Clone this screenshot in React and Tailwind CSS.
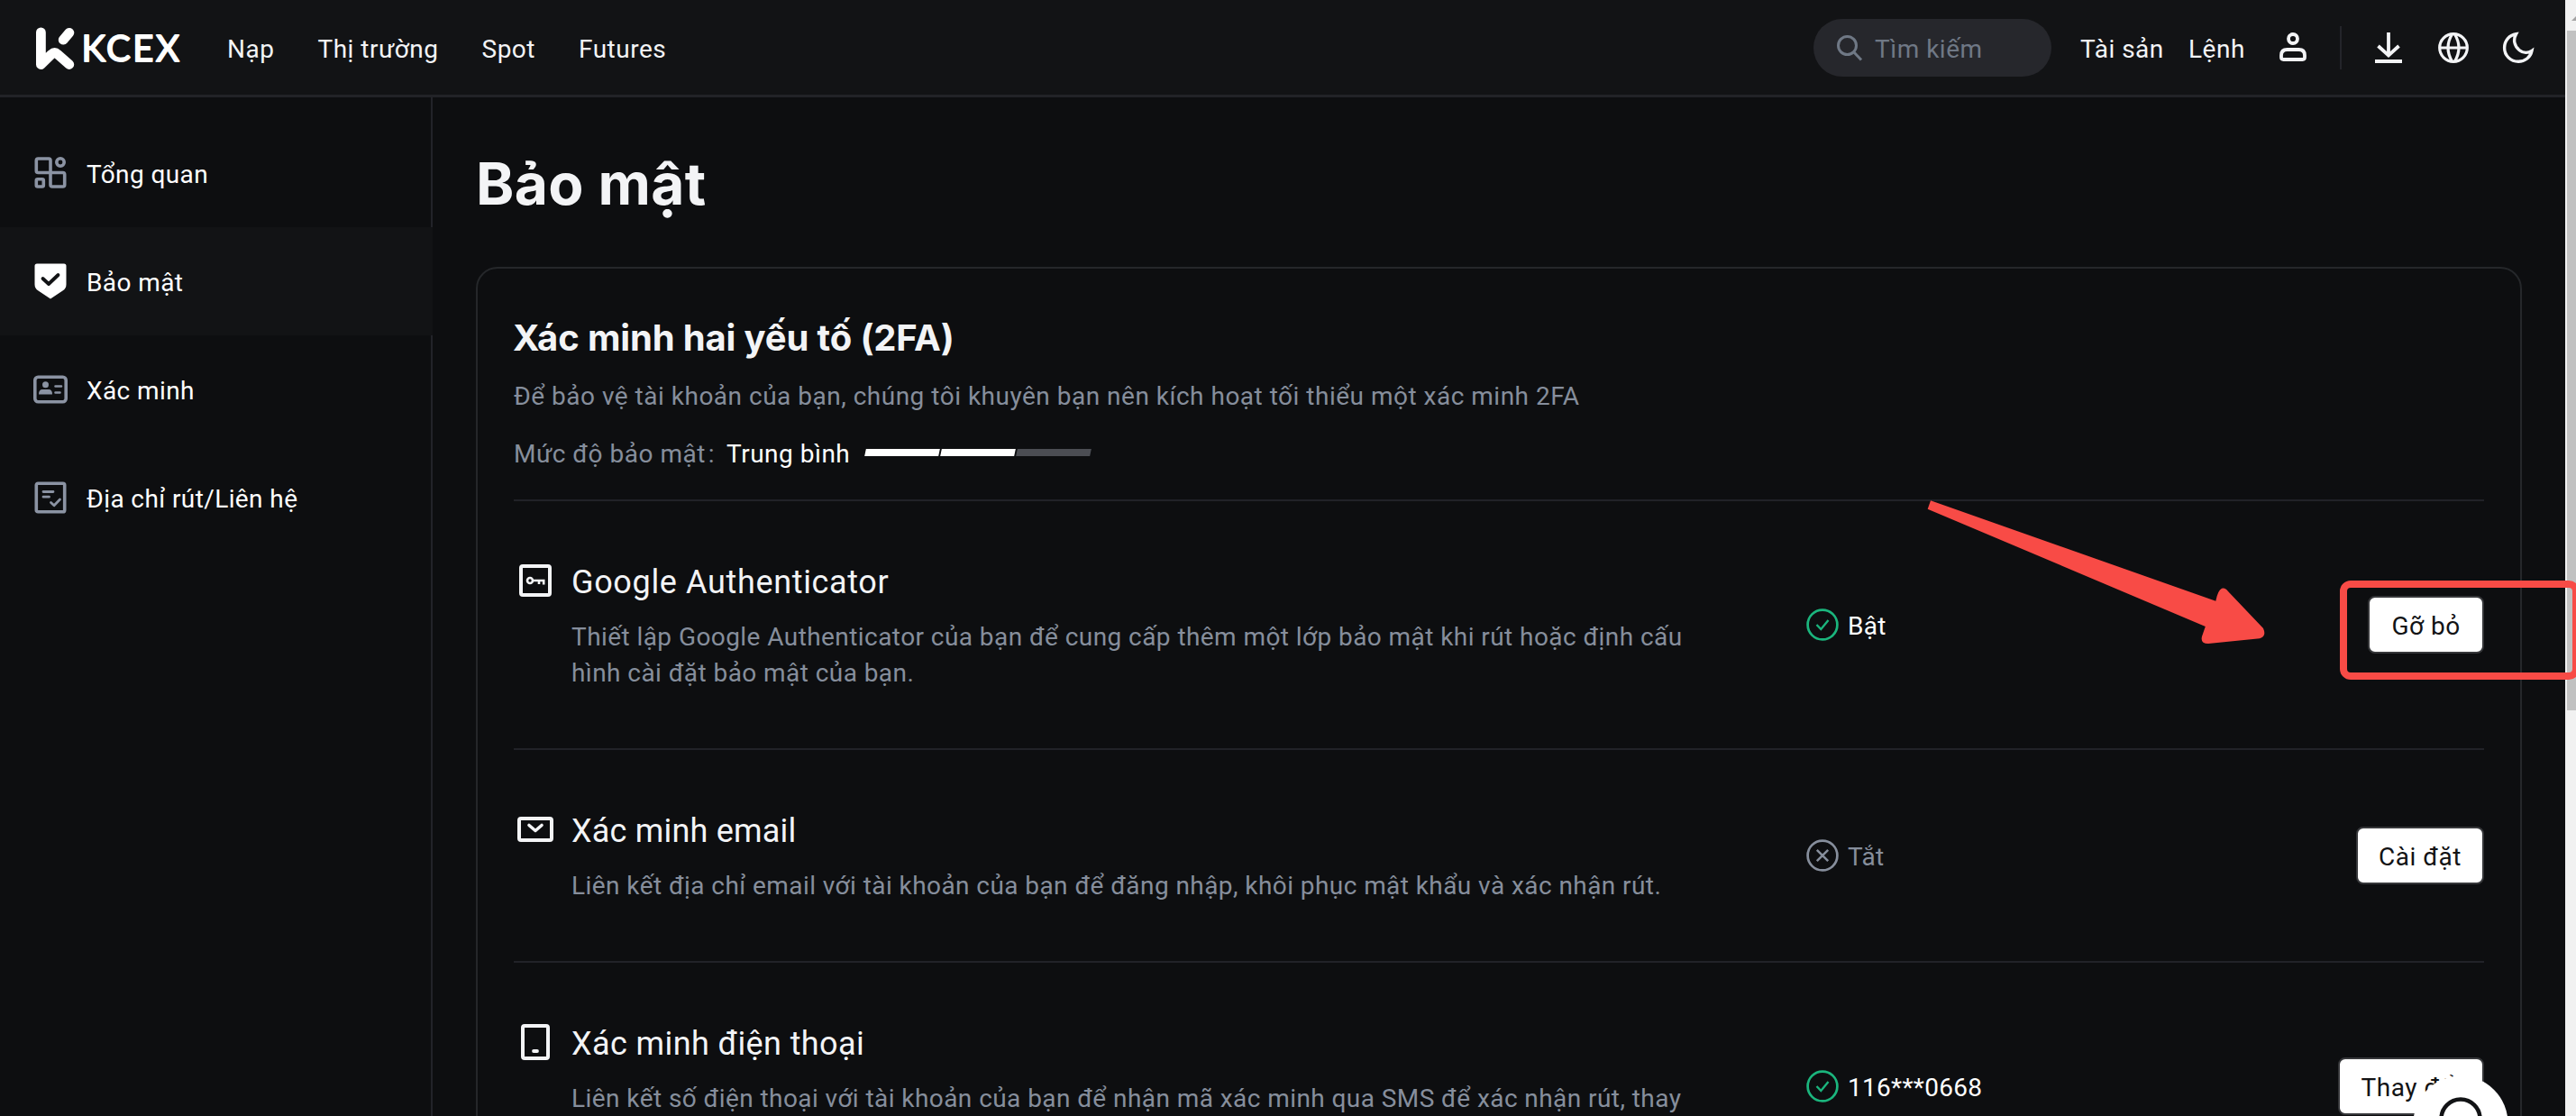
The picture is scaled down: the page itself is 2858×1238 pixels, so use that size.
import React from "react";

function LogoMark() {
  return (
    <svg width="46" height="48" viewBox="0 0 46 48" fill="none" stroke="#ffffff" strokeWidth="10.8" strokeLinecap="round" strokeLinejoin="round">
      <path d="M7.4 6.9V42.5L19.2 31.2Q22.6 28.2 26 31.2L38.8 42.5" />
      <path d="M38.9 7.3L32.2 15.2" />
    </svg>
  );
}

function SearchIcon() {
  return (
    <svg width="32" height="32" viewBox="0 0 32 32" fill="none" stroke="#6f7885" strokeWidth="3">
      <circle cx="13.5" cy="13.5" r="10" />
      <path d="M20.5 20.5L29 29.5" />
    </svg>
  );
}

function UserIcon() {
  return (
    <svg width="40" height="40" viewBox="0 0 40 40" fill="none" stroke="#f3f4f6" strokeWidth="3.8">
      <circle cx="20" cy="10" r="5" />
      <path d="M7 30.5V28.5Q7 22 13.5 22H26.500Q33 22 33 28.500V30.500Q33 33 30.500 33H9.500Q7 33 7 30.500Z" />
    </svg>
  );
}

function DownloadIcon() {
  return (
    <svg width="40" height="40" viewBox="0 0 40 40" fill="none" stroke="#f3f4f6" strokeWidth="3.8">
      <path d="M20 3V28M8.500 18L20 28.500L31.500 18M5 35H35" />
    </svg>
  );
}

function GlobeIcon() {
  return (
    <svg width="40" height="40" viewBox="0 0 40 40" fill="none" stroke="#f3f4f6" strokeWidth="3.2">
      <circle cx="20" cy="20" r="15.3" />
      <path d="M5 20H35M18.500 5Q9.500 20 18.500 35M21.500 5Q30.500 20 21.500 35" />
    </svg>
  );
}

function MoonIcon() {
  return (
    <svg width="40" height="40" viewBox="0 0 40 40" fill="none" stroke="#f3f4f6" strokeWidth="3.4" strokeLinejoin="miter">
      <path d="M17.500 4.800C10 6 4.600 12 4.600 20C4.600 28.600 11.400 35.300 20 35.300C27.500 35.300 33.500 30.500 35 23.300C31 26 25.500 26 21 22.500C15.500 18 14 11 17.500 4.800Z" />
    </svg>
  );
}

function OverviewIcon() {
  return (
    <svg width="40" height="40" viewBox="0 0 40 40" fill="none" stroke="#8b93a3" strokeWidth="3.600" strokeLinejoin="round">
      <path d="M20 19.500H6.300Q4.300 19.500 4.300 17.500V6Q4.300 4 6.300 4H18Q20 4 20 6ZM20 19.500H33.700Q35.700 19.500 35.700 21.500V33Q35.700 35 33.700 35H22Q20 35 20 33Z" />
      <circle cx="31" cy="8" r="4.200" />
      <rect x="4.300" y="26.800" width="8" height="8.200" rx="1.500" />
    </svg>
  );
}

function ShieldIcon() {
  return (
    <svg width="40" height="44" viewBox="0 0 40 44" fill="none">
      <path d="M5 2.500H35Q37.500 2.500 37.500 5V25.500Q37.500 30 33.500 32.500L20 41.500L6.500 32.500Q2.500 30 2.500 25.500V5Q2.500 2.500 5 2.500Z" fill="#ffffff" />
      <path d="M11.500 19L18 25L28.500 15" stroke="#121315" strokeWidth="3.800" strokeLinecap="round" strokeLinejoin="round" />
    </svg>
  );
}

function IdCardIcon() {
  return (
    <svg width="40" height="40" viewBox="0 0 40 40" fill="none">
      <rect x="2.800" y="6.300" width="34.400" height="27.400" rx="3.500" stroke="#8b93a3" strokeWidth="3.600" />
      <circle cx="14.500" cy="14.800" r="3.500" fill="#8b93a3" />
      <path d="M7 25.500Q7 20 11 20H18Q22 20 22 25.500Z" fill="#8b93a3" />
      <path d="M25.500 16.500H32M25.500 23.500H30.500" stroke="#8b93a3" strokeWidth="2.600" strokeLinecap="round" />
    </svg>
  );
}

function AddressIcon() {
  return (
    <svg width="40" height="40" viewBox="0 0 40 40" fill="none" stroke="#8b93a3" strokeLinecap="round" strokeLinejoin="round">
      <rect x="4.300" y="4.300" width="31.400" height="31.400" rx="1.800" strokeWidth="3.600" />
      <path d="M12 13.500H23M12 19.200H18.500M20.500 25.500L24 28.700L30.500 22" strokeWidth="2.800" />
    </svg>
  );
}

function AuthenticatorIcon() {
  return (
    <svg width="48" height="48" viewBox="0 0 48 48" fill="none" stroke="#f3f4f6">
      <rect x="8" y="6" width="32" height="32" rx="2" strokeWidth="4" />
      <circle cx="18" cy="22" r="3" strokeWidth="2.600" />
      <path d="M21 22H33.200V26.500M28 22V26" strokeWidth="2.600" />
    </svg>
  );
}

function EmailIcon() {
  return (
    <svg width="48" height="48" viewBox="0 0 48 48" fill="none" stroke="#f3f4f6">
      <rect x="6" y="10" width="36" height="24" rx="2" strokeWidth="4" />
      <path d="M17 17.500L24 23.500L31 17.500" strokeWidth="3.600" strokeLinecap="round" strokeLinejoin="round" />
    </svg>
  );
}

function PhoneIcon() {
  return (
    <svg width="48" height="48" viewBox="0 0 48 48" fill="none" stroke="#f3f4f6">
      <rect x="10" y="4" width="28" height="36" rx="2" strokeWidth="4" />
      <path d="M22 32H26" strokeWidth="3.800" strokeLinecap="round" />
    </svg>
  );
}

function CheckCircle() {
  return (
    <svg width="36" height="36" viewBox="0 0 36 36" fill="none" stroke="#1bb57d">
      <circle cx="18" cy="18" r="16.400" strokeWidth="2.700" />
      <path d="M11.500 18L16.300 23L24.500 13" strokeWidth="2.400" />
    </svg>
  );
}

function CrossCircle() {
  return (
    <svg width="36" height="36" viewBox="0 0 36 36" fill="none" stroke="#868e9c">
      <circle cx="18" cy="18" r="16.400" strokeWidth="2.700" />
      <path d="M11.800 11.800L24.200 24.200M24.200 11.800L11.800 24.200" strokeWidth="2.500" />
    </svg>
  );
}

function Header() {
  return (
    <header className="flex h-[108px] shrink-0 items-center whitespace-nowrap border-b-[3px] border-[#222327] bg-[#121315] pl-[38px] pr-8">
      <div className="flex items-center">
        <LogoMark />
        <svg width="120" height="48" viewBox="0 0 120 48">
          <text x="6.500" y="39.300" textLength="109" fontFamily="Lato, sans-serif" fontSize="40" fontWeight="400" fill="#ffffff" stroke="#ffffff" strokeWidth="1.800" strokeLinejoin="round">KCEX</text>
        </svg>
      </div>
      <nav className="ml-12 flex gap-12 pt-1">
        <span>Nạp</span>
        <span>Thị trường</span>
        <span>Spot</span>
        <span>Futures</span>
      </nav>
      <div className="ml-auto flex items-center gap-8">
        <div className="flex h-16 w-[264px] items-center gap-3 rounded-full bg-[#26272c] pl-6 text-[#6f7885]">
          <SearchIcon />
          <span className="pt-1">Tìm kiếm</span>
        </div>
        <span className="w-[88px] pt-1">Tài sản</span>
        <span className="w-[64px] pt-1">Lệnh</span>
        <UserIcon />
        <span className="h-12 w-[2px] bg-[#24252a]" />
        <DownloadIcon />
        <GlobeIcon />
        <MoonIcon />
      </div>
    </header>
  );
}

const menu = [
  { label: "Tổng quan", Icon: OverviewIcon, active: false },
  { label: "Bảo mật", Icon: ShieldIcon, active: true },
  { label: "Xác minh", Icon: IdCardIcon, active: false },
  { label: "Địa chỉ rút/Liên hệ", Icon: AddressIcon, active: false },
];

function Sidebar() {
  return (
    <aside className="flex w-[480px] shrink-0 flex-col">
      <div className="h-6 border-r-2 border-[#222329]" />
      {menu.map(({ label, Icon, active }) => (
        <div
          key={label}
          className={
            active
              ? "flex h-[120px] items-center gap-5 border-r-2 border-[#121315] bg-[#121315] pl-9"
              : "flex h-[120px] items-center gap-5 border-r-2 border-[#222329] pl-9"
          }
        >
          <Icon />
          <span className="pt-[3px] tracking-[0.4px] text-white">{label}</span>
        </div>
      ))}
      <div className="flex-1 border-r-2 border-[#222329]" />
    </aside>
  );
}

const methods = [
  {
    title: "Google Authenticator",
    titleTracking: "tracking-[0.65px]",
    desc: "Thiết lập Google Authenticator của bạn để cung cấp thêm một lớp bảo mật khi rút hoặc định cấu hình cài đặt bảo mật của bạn.",
    Icon: AuthenticatorIcon,
    on: true,
    status: "Bật",
    action: "Gỡ bỏ",
    height: "h-[276px]",
    buttonWidth: "w-[129px]",
  },
  {
    title: "Xác minh email",
    titleTracking: "tracking-[0.2px]",
    desc: "Liên kết địa chỉ email với tài khoản của bạn để đăng nhập, khôi phục mật khẩu và xác nhận rút.",
    Icon: EmailIcon,
    on: false,
    status: "Tắt",
    action: "Cài đặt",
    height: "h-[236px]",
    buttonWidth: "w-[142px]",
  },
  {
    title: "Xác minh điện thoại",
    titleTracking: "tracking-[0.4px]",
    desc: "Liên kết số điện thoại với tài khoản của bạn để nhận mã xác minh qua SMS để xác nhận rút, thay",
    Icon: PhoneIcon,
    on: true,
    status: "116***0668",
    action: "Thay đổi",
    height: "h-[276px]",
    buttonWidth: "w-[162px]",
  },
];

function MethodRow({ title, titleTracking, desc, Icon, on, status, action, height, buttonWidth }) {
  return (
    <div className={`flex shrink-0 items-center border-b-2 border-[#212228] ${height}`}>
      <div className="flex w-[1434px] gap-4 self-start pt-[66px]">
        <Icon />
        <div className="flex w-[1250px] flex-col gap-[17px]">
          <h3 className={`text-[36px] leading-[48px] ${titleTracking}`}>{title}</h3>
          <p className="tracking-[0.43px] text-[#868e9c]">{desc}</p>
        </div>
      </div>
      <div className="flex items-center gap-[10px]">
        {on ? <CheckCircle /> : <CrossCircle />}
        <span className={on ? "pt-[3px] tracking-[0.3px] text-white" : "pt-[3px] tracking-[0.3px] text-[#868e9c]"}>{status}</span>
      </div>
      <button className={`ml-auto flex h-16 items-center justify-center whitespace-nowrap rounded-lg border-2 border-[#36373a] bg-white pt-[3px] text-[#121315] ${buttonWidth}`}>
        {action}
      </button>
    </div>
  );
}

function SecurityCard() {
  return (
    <section className="flex h-[1000px] flex-col rounded-[24px] border-2 border-[#25272a] px-10 pt-[51px]">
      <h2 className="-ml-px font-['Inter',sans-serif] text-[40px] font-bold leading-[52px] tracking-[-0.15px]">Xác minh hai yếu tố (2FA)</h2>
      <p className="mt-[19px] text-[#868e9c]">
        Để bảo vệ tài khoản của bạn, chúng tôi khuyên bạn nên kích hoạt tối thiểu một xác minh 2FA
      </p>
      <div className="mt-6 flex h-[72px] shrink-0 items-start border-b-2 border-[#212228]">
        <span className="w-[236px] text-[#868e9c]">
          Mức độ bảo mật<span className="ml-[3px]">:</span>
        </span>
        <span className="w-[154px] text-white">Trung bình</span>
        <div className="flex gap-[2px] pt-[14px]">
          <span className="h-2 w-[82px] -skew-x-12 bg-white" />
          <span className="h-2 w-[82px] -skew-x-12 bg-white" />
          <span className="h-2 w-[82px] -skew-x-12 bg-[#4b4d53]" />
        </div>
      </div>
      {methods.map((m) => (
        <MethodRow key={m.title} {...m} />
      ))}
    </section>
  );
}

function Scrollbar() {
  return (
    <div className="flex w-3 shrink-0 flex-col bg-[#f1f1f1] pl-[2px]">
      <div className="flex h-[34px] items-center justify-end overflow-hidden pt-2">
        <svg width="5" height="6" viewBox="0 0 5 6">
          <path d="M0 5L5 0V5Z" fill="#a3a3a3" />
        </svg>
      </div>
      <div className="h-[754px] bg-[#c1c1c1]" />
    </div>
  );
}

function Annotation() {
  return (
    <>
      <svg className="absolute left-[2130px] top-[545px]" width="390" height="180" viewBox="2130 545 390 180">
        <path
          d="M2142 555.300L2458.300 666.700Q2460.500 655 2465 652.700Q2469 651.500 2472 656L2511 697Q2515 706 2507 708.300L2450 714Q2441 714 2443 706L2446.800 695L2138.700 564.700Z"
          fill="#f84b46"
        />
      </svg>
      <div className="absolute left-[2596px] top-[644px] h-[110px] w-[266px] rounded-xl border-8 border-[#f84b46]" />
    </>
  );
}

function ChatBubble() {
  return (
    <svg className="absolute bottom-0 left-[2676px]" width="110" height="46" viewBox="0 0 110 46" fill="none">
      <circle cx="54" cy="54" r="52.500" fill="#ffffff" />
      <circle cx="54" cy="49" r="21.500" stroke="#121315" strokeWidth="4.500" />
    </svg>
  );
}

export default function App() {
  return (
    <div className="relative flex h-[1238px] w-[2858px] overflow-hidden bg-[#0d0e10] font-['Roboto',sans-serif] text-[28px] leading-10 tracking-[0.5px] text-[#f3f4f6]">
      <div className="flex min-w-0 flex-1 flex-col">
        <Header />
        <div className="flex min-h-0 flex-1">
          <Sidebar />
          <main className="flex-1 overflow-hidden px-12 pt-12">
            <h1 className="mb-11 font-['Inter',sans-serif] text-[64px] font-bold leading-[96px] tracking-[0.4px]">Bảo mật</h1>
            <SecurityCard />
          </main>
        </div>
      </div>
      <Scrollbar />
      <Annotation />
      <ChatBubble />
    </div>
  );
}
